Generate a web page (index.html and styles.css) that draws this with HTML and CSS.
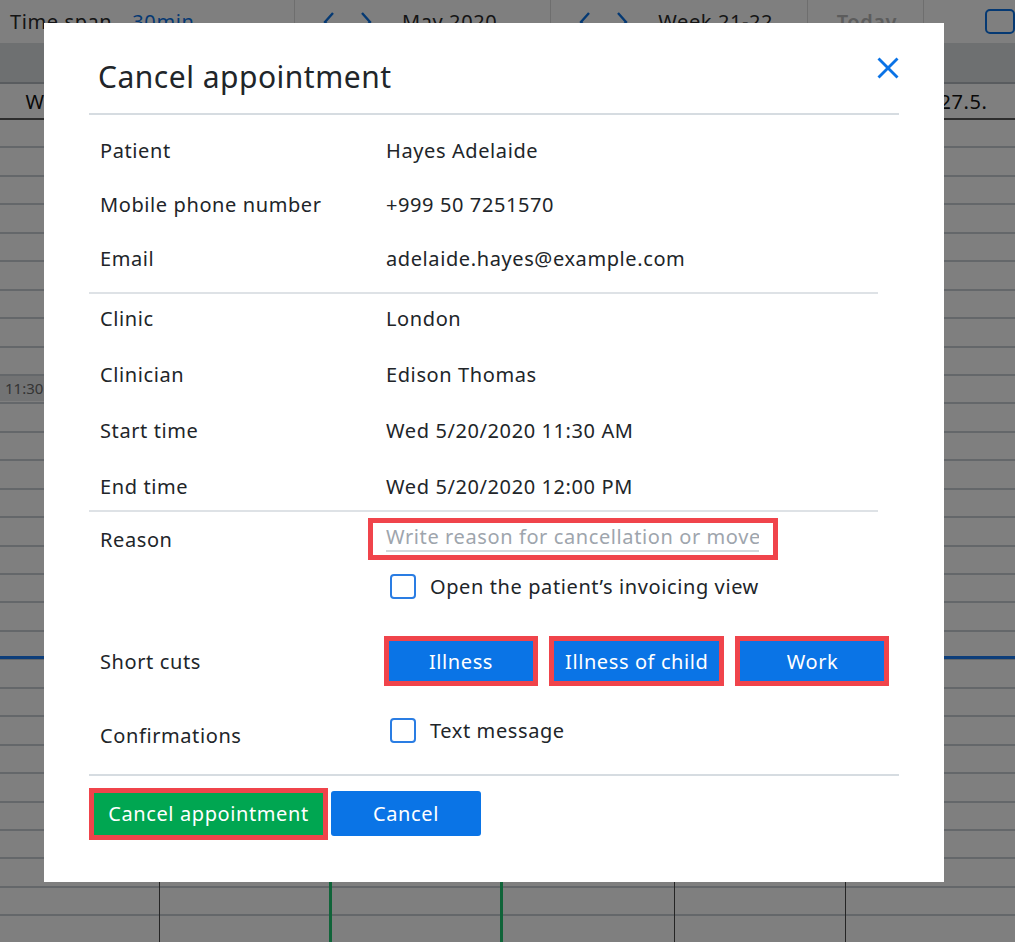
FILE: index.html
```html
<!DOCTYPE html>
<html lang="en">
<head>
<meta charset="utf-8">
<title>Cancel appointment</title>
<link rel="stylesheet" href="styles.css">
</head>
<body>
<div class="page">
  <div class="toolbar">
    <div class="tb-item tb-span"><span class="tb-text">Time span</span><span class="tb-link">30min</span></div>
    <div class="tb-item tb-nav">
      <span class="chev"><svg viewBox="0 0 12 22" width="12" height="22"><polyline points="10,2 2,11 10,20"/></svg></span>
      <span class="chev"><svg viewBox="0 0 12 22" width="12" height="22"><polyline points="2,2 10,11 2,20"/></svg></span>
      <span class="tb-text">May 2020</span>
    </div>
    <div class="tb-item tb-nav">
      <span class="chev"><svg viewBox="0 0 12 22" width="12" height="22"><polyline points="10,2 2,11 10,20"/></svg></span>
      <span class="chev"><svg viewBox="0 0 12 22" width="12" height="22"><polyline points="2,2 10,11 2,20"/></svg></span>
      <span class="tb-text">Week 21-22</span>
    </div>
    <div class="tb-item tb-today"><span class="tb-muted">Today</span></div>
    <div class="tb-item tb-opt"><span class="tb-box"></span></div>
  </div>
  <div class="day-band"></div>
  <div class="date-row">
    <div class="date-cell">Wed 20.5.</div>
    <div class="date-cell"></div>
    <div class="date-cell"></div>
    <div class="date-cell"></div>
    <div class="date-cell"></div>
    <div class="date-cell date-last">Wed 27.5.</div>
  </div>
  <div class="grid">
    <div class="day-col"></div>
    <div class="day-col col-mark"></div>
    <div class="day-col col-mark"></div>
    <div class="day-col"></div>
    <div class="day-col"></div>
    <div class="day-col"></div>
    <div class="time-label">11:30</div>
    <div class="now-line"></div>
  </div>
</div>

<div class="backdrop"></div>

<div class="modal" role="dialog">
  <div class="modal-header">
    <h2 class="modal-title">Cancel appointment</h2>
    <button class="close" aria-label="Close">
      <svg viewBox="0 0 22 22" width="22" height="22"><line x1="1.5" y1="1.5" x2="20.5" y2="20.5"/><line x1="20.5" y1="1.5" x2="1.5" y2="20.5"/></svg>
    </button>
  </div>

  <div class="info info-contact">
    <div class="row"><span class="label">Patient</span><span class="value">Hayes Adelaide</span></div>
    <div class="row"><span class="label">Mobile phone number</span><span class="value">+999 50 7251570</span></div>
    <div class="row"><span class="label">Email</span><span class="value">adelaide.hayes@example.com</span></div>
  </div>

  <div class="info info-appt">
    <div class="row"><span class="label">Clinic</span><span class="value">London</span></div>
    <div class="row"><span class="label">Clinician</span><span class="value">Edison Thomas</span></div>
    <div class="row"><span class="label">Start time</span><span class="value">Wed 5/20/2020 11:30 AM</span></div>
    <div class="row"><span class="label">End time</span><span class="value">Wed 5/20/2020 12:00 PM</span></div>
  </div>

  <div class="form">
    <div class="frow frow-reason">
      <span class="label">Reason</span>
      <div class="reason-box"><input class="reason-input" type="text" placeholder="Write reason for cancellation or move"></div>
    </div>
    <div class="frow frow-check">
      <span></span>
      <label class="check"><span class="box"></span><span>Open the patient’s invoicing view</span></label>
    </div>
    <div class="frow frow-short">
      <span class="label">Short cuts</span>
      <div class="shortcuts">
        <button class="btn-short">Illness</button>
        <button class="btn-short">Illness of child</button>
        <button class="btn-short">Work</button>
      </div>
    </div>
    <div class="frow frow-confirm">
      <span class="label">Confirmations</span>
      <label class="check"><span class="box"></span><span>Text message</span></label>
    </div>
  </div>

  <div class="modal-footer">
    <button class="btn btn-confirm">Cancel appointment</button>
    <button class="btn btn-cancel">Cancel</button>
  </div>
</div>
</body>
</html>
```

FILE: styles.css
```css
* { box-sizing: border-box; margin: 0; padding: 0; }

html, body {
  width: 1015px;
  height: 942px;
  overflow: hidden;
}

body {
  font-family: "Noto Sans", "Open Sans", sans-serif;
  letter-spacing: 0.6px;
  color: #212529;
  background: #fff;
}

/* ---------- background calendar ---------- */
.page {
  height: 942px;
  overflow: hidden;
}

.toolbar {
  display: flex;
  height: 43px;
  background: #fff;
}

.tb-item {
  display: flex;
  align-items: center;
  border-right: 1px solid #dcdcdc;
  font-size: 20px;
  color: #2a2a2a;
  white-space: nowrap;
}

.tb-span { width: 297px; padding-left: 10px; gap: 20px; }
.tb-link { color: #0a73e6; }

.tb-nav { width: 258px; padding-left: 28px; }
.tb-nav .chev { display: flex; margin-right: 25px; }
.tb-nav .chev + .chev { margin-right: 30px; }
.chev svg polyline { fill: none; stroke: #0a73e6; stroke-width: 2.4; }

.tb-today { width: 117px; padding-left: 29px; }
.tb-muted { color: #b8b8b8; font-weight: 600; }

.tb-opt { flex: 1; border-right: 0; padding-left: 61px; }
.tb-box {
  width: 30px;
  height: 25px;
  border: 2px solid #0a73e6;
  border-radius: 5px;
  flex: none;
}

.day-band {
  height: 41px;
  background: #dde0e3;
  border-bottom: 2px solid #b3b9bf;
}

.date-row {
  display: flex;
  height: 36px;
  margin-left: -11.5px;
  border-bottom: 2px solid #5a5a5a;
}

.date-cell {
  width: 171.5px;
  flex: none;
  display: flex;
  align-items: center;
  justify-content: center;
  font-size: 20px;
  color: #111;
}

.date-last { padding-left: 14px; }

.grid {
  position: relative;
  display: flex;
  height: 822px;
  margin-left: -11.5px;
  background: repeating-linear-gradient(to bottom, #ffffff 0, #ffffff 26.44px, #c9cfd5 26.44px, #c9cfd5 28.44px);
}

.day-col {
  width: 171.5px;
  flex: none;
  border-right: 1px solid #4a4a4a;
}

.day-col.col-mark { border-right: 3px solid #20c872; }

.time-label {
  position: absolute;
  left: 11.5px;
  top: 256px;
  width: 44px;
  height: 25px;
  background: #e4e6e8;
  font-size: 15px;
  letter-spacing: 0;
  color: #6a6a6a;
  padding-left: 5px;
  line-height: 25px;
}

.now-line {
  position: absolute;
  left: 0;
  right: 0;
  top: 536px;
  height: 3px;
  background: #1a7df5;
}

/* ---------- overlay ---------- */
.backdrop {
  position: fixed;
  inset: 0;
  background: rgba(0, 0, 0, 0.5);
}

.modal {
  position: fixed;
  left: 44px;
  top: 23px;
  width: 900px;
  height: 859px;
  background: #fff;
  padding: 0 45px;
}

.modal-header {
  display: flex;
  justify-content: space-between;
  align-items: flex-start;
  height: 92px;
  padding-left: 9px;
  border-bottom: 2px solid #d6dce1;
}

.modal-title {
  font-size: 30px;
  letter-spacing: 0.5px;
  font-weight: 400;
  line-height: 40px;
  margin-top: 34px;
  color: #212529;
}

.close {
  margin-top: 34px;
  width: 22px;
  height: 22px;
  border: 0;
  background: none;
  display: flex;
}

.close svg line { stroke: #0a73e6; stroke-width: 2.8; }

.info {
  width: 789px;
  border-bottom: 2px solid #dee2e6;
  display: flex;
  flex-direction: column;
}

.info-contact { padding: 8px 0 7px; }
.info-contact .row { height: 54px; }

.info-appt { padding: 0; gap: 8px; }
.info-appt .row { height: 48px; }

.row {
  display: grid;
  grid-template-columns: 286px 1fr;
  align-items: center;
  padding-left: 11px;
  font-size: 20px;
  line-height: 27px;
}

.label { font-size: 20px; line-height: 27px; color: #212529; }
.value { color: #212529; }

/* ---------- form ---------- */
.form {
  padding-top: 6px;
  padding-bottom: 31px;
  display: flex;
  flex-direction: column;
}

.frow {
  display: grid;
  grid-template-columns: 268px 1fr;
  align-items: center;
  padding-left: 11px;
  font-size: 20px;
  line-height: 27px;
}

.reason-box {
  width: 410px;
  height: 42px;
  border: 5px solid #f0444b;
  padding: 0 14px 0 13px;
}

.reason-input {
  display: block;
  width: 100%;
  height: 29px;
  border: 0;
  border-bottom: 2px solid #d3d7db;
  font-family: inherit;
  font-size: 20px;
  letter-spacing: 0.6px;
  color: #212529;
  background: transparent;
  outline: none;
}

.reason-input::placeholder { color: #9ea5ad; }

.frow-check { margin-top: 14px; }

.check {
  display: flex;
  align-items: center;
  gap: 14px;
  margin-left: 22px;
  height: 25px;
  color: #212529;
}

.box {
  width: 26px;
  height: 25px;
  border: 2px solid #2a7de3;
  border-radius: 4px;
  flex: none;
  background: #fff;
}

.frow-short { margin-top: 42px; }

.shortcuts {
  display: flex;
  gap: 21px;
  margin-left: 21px;
}

.btn-short {
  min-width: 144px;
  height: 40px;
  padding: 0 11px;
  border: 0;
  background: #0a74e6;
  color: #fff;
  font-family: inherit;
  font-size: 20px;
  letter-spacing: 0.6px;
  outline: 5px solid #f0444b;
}

.frow-confirm { margin-top: 37px; height: 25px; align-items: start; }
.frow-confirm .label { margin-top: 4px; }

/* ---------- footer ---------- */
.modal-footer {
  border-top: 2px solid #d6dce1;
  padding-top: 15px;
  display: flex;
  align-items: center;
}

.btn {
  border: 0;
  border-radius: 3px;
  color: #fff;
  font-family: inherit;
  font-size: 20px;
  letter-spacing: 0.6px;
}

.btn-confirm {
  margin-left: 5px;
  width: 229px;
  height: 42px;
  border-radius: 0;
  background: #00a651;
  outline: 5px solid #f0444b;
}

.btn-cancel {
  margin-left: 8px;
  width: 150px;
  height: 45px;
  background: #0a74e6;
}
```
